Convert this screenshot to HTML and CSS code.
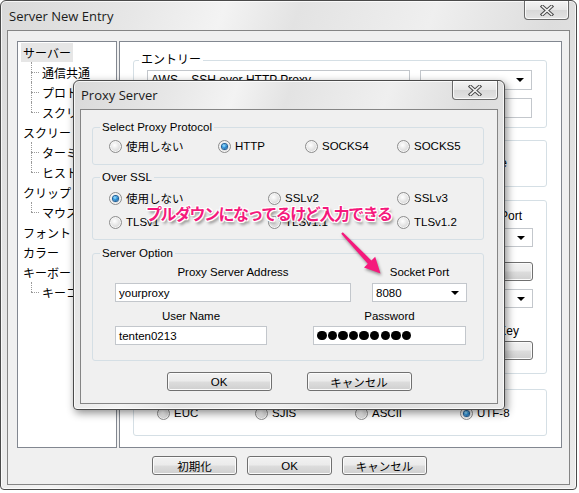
FILE: index.html
```html
<!DOCTYPE html>
<html lang="ja">
<head>
<meta charset="utf-8">
<title>Server New Entry</title>
<link rel="stylesheet" href="styles.css">
</head>
<body>
<div class="win main">
  <div class="titlebar">
    <span class="title">Server New Entry</span>
    <div class="close main-close">
      <svg width="14" height="11" viewBox="0 0 14 11"><path d="M2.5 1.5 L11.5 9.5 M11.5 1.5 L2.5 9.5" stroke="#4a4a4a" stroke-width="3.6" stroke-linecap="square" fill="none"/><path d="M2.5 1.5 L11.5 9.5 M11.5 1.5 L2.5 9.5" stroke="#f4f4f4" stroke-width="1.6" stroke-linecap="square" fill="none"/></svg>
    </div>
  </div>
  <div class="client">
    <div class="panes">
      <div class="tree">
        <div class="row l0"><span class="lbl sel">サーバー</span></div>
        <div class="row l1 c"><span class="lbl">通信共通</span></div>
        <div class="row l1 c"><span class="lbl">プロト</span></div>
        <div class="row l1 c last"><span class="lbl">スクリ</span></div>
        <div class="row l0"><span class="lbl">スクリー</span></div>
        <div class="row l1 c"><span class="lbl">ターミ</span></div>
        <div class="row l1 c last"><span class="lbl">ヒスト</span></div>
        <div class="row l0"><span class="lbl">クリップ</span></div>
        <div class="row l1 c last"><span class="lbl">マウス</span></div>
        <div class="row l0"><span class="lbl">フォント</span></div>
        <div class="row l0"><span class="lbl">カラー</span></div>
        <div class="row l0"><span class="lbl">キーボー</span></div>
        <div class="row l1 c last"><span class="lbl">キーコ</span></div>
      </div>
      <div class="panel">
        <fieldset class="pg g1">
          <legend>エントリー</legend>
          <div class="entry-grid">
            <div class="tb">AWS – SSH over HTTP Proxy</div>
            <div class="tb dd"><span class="arrow"></span></div>
            <div></div>
            <div class="tb"></div>
          </div>
        </fieldset>
        <fieldset class="pg g2">
          <div class="g2-label">e</div>
        </fieldset>
        <fieldset class="pg g3">
          <div class="rcol">
            <div class="rlabel port">Port</div>
            <div class="tb dd r-dd1"><span class="arrow"></span></div>
            <div class="btn r-btn1"></div>
            <div class="tb dd r-dd2"><span class="arrow"></span></div>
            <div class="rlabel key">Key</div>
            <div class="btn r-btn2"></div>
          </div>
        </fieldset>
        <fieldset class="pg g4">
          <div class="enc-row">
            <div class="opt"><span class="radio"></span><span>EUC</span></div>
            <div class="opt"><span class="radio"></span><span>SJIS</span></div>
            <div class="opt"><span class="radio"></span><span>ASCII</span></div>
            <div class="opt"><span class="radio on"></span><span>UTF-8</span></div>
          </div>
        </fieldset>
      </div>
    </div>
    <div class="footer">
      <div class="btn fbtn">初期化</div>
      <div class="btn fbtn">OK</div>
      <div class="btn fbtn">キャンセル</div>
    </div>
  </div>
</div>

<div class="win dialog">
  <div class="titlebar dtitlebar">
    <span class="title">Proxy Server</span>
    <div class="close dlg-close">
      <svg width="14" height="11" viewBox="0 0 14 11"><path d="M2.5 1.5 L11.5 9.5 M11.5 1.5 L2.5 9.5" stroke="#4a4a4a" stroke-width="3.6" stroke-linecap="square" fill="none"/><path d="M2.5 1.5 L11.5 9.5 M11.5 1.5 L2.5 9.5" stroke="#f4f4f4" stroke-width="1.6" stroke-linecap="square" fill="none"/></svg>
    </div>
  </div>
  <div class="client dclient">
    <fieldset class="dg dg1">
      <legend>Select Proxy Protocol</legend>
      <div class="proto-row">
        <div class="opt"><span class="radio"></span><span>使用しない</span></div>
        <div class="opt"><span class="radio on"></span><span>HTTP</span></div>
        <div class="opt"><span class="radio"></span><span>SOCKS4</span></div>
        <div class="opt"><span class="radio"></span><span>SOCKS5</span></div>
      </div>
    </fieldset>
    <fieldset class="dg dg2">
      <legend>Over SSL</legend>
      <div class="ssl-row first">
        <div class="opt"><span class="radio on"></span><span>使用しない</span></div>
        <div class="opt"><span class="radio"></span><span>SSLv2</span></div>
        <div class="opt"><span class="radio"></span><span>SSLv3</span></div>
      </div>
      <div class="ssl-row second">
        <div class="opt"><span class="radio"></span><span>TLSv1</span></div>
        <div class="opt"><span class="radio"></span><span>TLSv1.1</span></div>
        <div class="opt"><span class="radio"></span><span>TLSv1.2</span></div>
      </div>
    </fieldset>
    <fieldset class="dg dg3">
      <legend>Server Option</legend>
      <div class="opt-row row-a">
        <div class="field">
          <div class="flabel">Proxy Server Address</div>
          <div class="tb">yourproxy</div>
        </div>
        <div class="field">
          <div class="flabel">Socket Port</div>
          <div class="tb dd">8080<span class="arrow"></span></div>
        </div>
      </div>
      <div class="opt-row row-b">
        <div class="field">
          <div class="flabel">User Name</div>
          <div class="tb">tenten0213</div>
        </div>
        <div class="field">
          <div class="flabel">Password</div>
          <div class="tb pw"><i></i><i></i><i></i><i></i><i></i><i></i><i></i><i></i><i></i></div>
        </div>
      </div>
    </fieldset>
    <div class="dbtns">
      <div class="btn dbtn">OK</div>
      <div class="btn dbtn">キャンセル</div>
    </div>
  </div>
</div>

<div class="note">プルダウンになってるけど入力できる</div>
<svg class="arrow-mark" width="60" height="60" viewBox="335 225 60 60">
  <polygon points="342.8,232.2 371.4,260.4 375.2,256.8 380.5,273.5 364,267.4 367.8,263.8 341.2,233.8" fill="#f5197c"/>
</svg>
</body>
</html>
```
FILE: styles.css
```css
* { box-sizing: border-box; }

body {
  margin: 0;
  width: 579px;
  height: 493px;
  overflow: hidden;
  background: #ffffff;
  font-family: "Liberation Sans", "Noto Sans CJK JP", sans-serif;
  font-size: 11.5px;
  color: #000;
  position: relative;
}

.win {
  border: 1px solid #4a4a4a;
  border-radius: 6px 6px 4px 4px;
  background: linear-gradient(110deg, #d9d9d9 0%, #e7e7e7 18%, #f3f3f3 30%, #e3e3e3 40%, #efefef 58%, #dddddd 74%, #eaeaea 100%);
  box-shadow: inset 0 0 0 1px rgba(255, 255, 255, 0.75);
}

.main {
  width: 577px;
  height: 490px;
  display: flex;
  flex-direction: column;
}

.titlebar {
  height: 29px;
  flex: none;
  display: flex;
  align-items: center;
  padding-left: 8px;
}

.title {
  font-family: "Open Sans", "Liberation Sans", sans-serif;
  font-size: 13px;
  color: #1b1b1b;
}

.close {
  margin-left: auto;
  align-self: flex-start;
  height: 19px;
  border: 1px solid #6b6b6b;
  border-top: none;
  border-radius: 0 0 4px 4px;
  background: linear-gradient(#f4f4f4, #e6e6e6 50%, #d8d8d8 51%, #e4e4e4);
  box-shadow: inset 0 0 0 1px rgba(255, 255, 255, 0.8);
  display: flex;
  align-items: center;
  justify-content: center;
}

.main-close { width: 45px; margin-right: 7px; }

.client {
  margin: 0 6px;
  background: #f0f0f0;
  border: 1px solid #858585;
}

.main .client {
  height: 455px;
  padding: 10px 0 0 9px;
}

.panes {
  display: flex;
  gap: 2px;
  height: 407px;
}

/* tree */
.tree {
  width: 100px;
  background: #fff;
  border: 1px solid #828790;
  overflow: hidden;
  font-family: "Noto Sans CJK JP", sans-serif;
}

.row {
  height: 20px;
  display: flex;
  align-items: center;
  white-space: nowrap;
  position: relative;
}

.lbl {
  padding: 0 2px;
  line-height: 19px;
  font-size: 12px;
}

.l0 .lbl { margin-left: 3px; }
.l1 .lbl { margin-left: 22px; }

.sel { background: #e6e6e6; }

.c::before {
  content: "";
  position: absolute;
  left: 13px;
  top: 10px;
  width: 8px;
  border-top: 1px dotted #9a9a9a;
}

.c::after {
  content: "";
  position: absolute;
  left: 13px;
  top: 0;
  height: 20px;
  border-left: 1px dotted #9a9a9a;
}

.c.last::after { height: 10px; }

/* right panel */
.panel {
  width: 443px;
  background: #fff;
  border: 1px solid #828790;
  padding-left: 13px;
  display: flex;
  flex-direction: column;
}

fieldset {
  margin: 0;
  padding: 0;
  border: 1px solid #d5dfe5;
  border-radius: 3px;
  min-width: 0;
}

legend {
  padding: 0 2px;
  line-height: 14px;
  font-size: 11.5px;
}

.pg { width: 414px; }
.pg legend { margin-left: 5px; font-size: 12px; }

.g1 { margin-top: 11px; height: 75px; }
.g2 { margin-top: 12px; height: 47px; }
.g3 { margin-top: 13px; height: 174px; }
.g4 { margin-top: 15px; height: 47px; }

.entry-grid {
  margin: 3px 0 0 13px;
  display: grid;
  grid-template-columns: 263px 112px;
  grid-auto-rows: 20px;
  column-gap: 10px;
  row-gap: 8px;
}

.tb {
  height: 19px;
  background: #fff;
  border: 1px solid #c3c7cc;
  padding: 0 3px;
  display: flex;
  align-items: center;
  white-space: nowrap;
  overflow: hidden;
}

.entry-grid .tb { height: 20px; font-size: 12px; }

.dd .arrow {
  margin-left: auto;
  margin-right: 4px;
  width: 0;
  height: 0;
  border-left: 4px solid transparent;
  border-right: 4px solid transparent;
  border-top: 4px solid #000;
}

.g2-label {
  margin-top: 15px;
  width: 373px;
  text-align: right;
  line-height: 14px;
  font-size: 12px;
}

.rcol {
  margin-left: 287px;
  width: 112px;
  display: flex;
  flex-direction: column;
}

.rlabel {
  line-height: 14px;
  text-align: right;
  white-space: nowrap;
  font-size: 12px;
}

.port { margin-top: 8px; padding-right: 11px; }
.r-dd1 { margin-top: 5px; }
.r-btn1 { margin-top: 15px; height: 18px; }
.r-dd2 { margin-top: 8px; }
.key { margin-top: 16px; padding-right: 14px; }
.r-btn2 { margin-top: 3px; height: 17px; }

.enc-row {
  margin: 16px 0 0 23px;
  display: grid;
  grid-template-columns: 98px 100px 105px auto;
}

/* radios */
.opt {
  display: flex;
  align-items: center;
  gap: 4px;
  height: 14px;
  white-space: nowrap;
}

.radio {
  flex: none;
  width: 13px;
  height: 13px;
  border-radius: 50%;
  border: 1px solid #8d8d8d;
  background: radial-gradient(circle at 42% 38%, #ffffff 0%, #e6e6e6 45%, #c6c6c6 100%);
  box-shadow: inset 0 0 0 1px #f6f6f6;
  position: relative;
}

.radio.on::after {
  content: "";
  position: absolute;
  left: 3px;
  top: 3px;
  width: 5px;
  height: 5px;
  border-radius: 50%;
  background: radial-gradient(circle at 40% 35%, #a6e8ff 0%, #2f94dc 45%, #0b4a86 100%);
  box-shadow: 0 0 0 1px #1d5f98;
}

/* buttons */
.btn {
  height: 19px;
  border: 1px solid #707070;
  border-radius: 3px;
  background: linear-gradient(#f2f2f2 0%, #ebebeb 48%, #dddddd 52%, #cfcfcf 100%);
  box-shadow: inset 0 0 0 1px #fbfbfb;
  display: flex;
  align-items: center;
  justify-content: center;
  white-space: nowrap;
}

.footer {
  margin: 8px 0 0 135px;
  display: flex;
  gap: 10px;
}

.fbtn { width: 85px; }

/* dialog */
.dialog {
  position: absolute;
  left: 73px;
  top: 80px;
  width: 432px;
  height: 330px;
  display: flex;
  flex-direction: column;
  box-shadow: inset 0 0 0 1px rgba(255, 255, 255, 0.75), 2px 3px 9px rgba(0, 0, 0, 0.45);
}

.dtitlebar { height: 28px; padding-left: 7px; }

.dlg-close { width: 46px; margin-right: 6px; }

.dclient {
  height: 295px;
  padding: 10px 0 0 11px;
}

.dg { width: 392px; }
.dg legend { margin-left: 7px; }

.dg1 { height: 45px; }
.dg2 { margin-top: 5px; height: 70px; }
.dg3 { margin-top: 6px; height: 115px; }

.proto-row {
  margin: 5px 0 0 16px;
  display: grid;
  grid-template-columns: 109px 87px 92px auto;
}

.ssl-row {
  margin-left: 16px;
  display: grid;
  grid-template-columns: 159px 129px auto;
}

.ssl-row.first { margin-top: 7px; }
.ssl-row.second { margin-top: 10px; }

.opt-row {
  margin-left: 22px;
  display: grid;
}

.row-a { margin-top: 5px; grid-template-columns: 236px 95px; column-gap: 21px; }
.row-b { margin-top: 7px; grid-template-columns: 152px 153px; column-gap: 46px; }

.flabel {
  line-height: 14px;
  text-align: center;
  white-space: nowrap;
}

.row-a .tb { margin-top: 4px; }
.row-b .tb { margin-top: 3px; }

.pw { gap: 1.1px; padding-left: 3px; }
.pw i {
  width: 9.5px;
  height: 9.5px;
  border-radius: 50%;
  background: #000;
  flex: none;
}

.dbtns {
  margin-top: 11px;
  display: flex;
  justify-content: center;
  gap: 35px;
  padding-right: 11px;
}

.dbtn { width: 105px; }

/* annotation */
.note {
  position: absolute;
  left: 146px;
  top: 203px;
  font-family: "Noto Sans CJK JP", sans-serif;
  font-weight: bold;
  font-size: 16px;
  line-height: 20px;
  letter-spacing: -1.5px;
  color: #f5197c;
  white-space: nowrap;
  text-shadow: 1px 0 #fff, -1px 0 #fff, 0 1px #fff, 0 -1px #fff, 1px 1px #fff, -1px -1px #fff, 1px -1px #fff, -1px 1px #fff, 2px 3px 3px rgba(0, 0, 0, 0.45);
}

.arrow-mark {
  position: absolute;
  left: 335px;
  top: 225px;
  filter: drop-shadow(1px 2px 1.5px rgba(0, 0, 0, 0.4));
}
```
